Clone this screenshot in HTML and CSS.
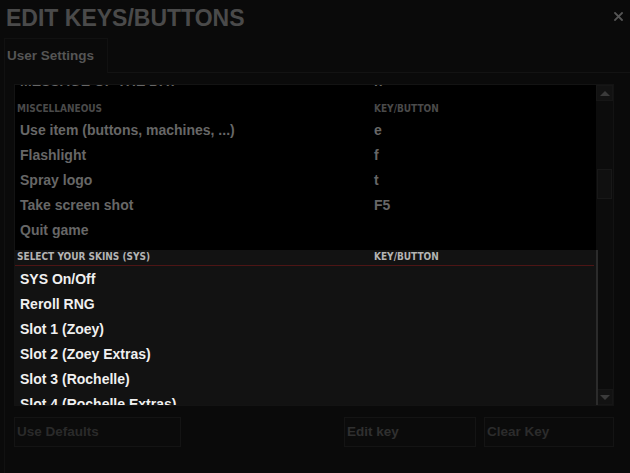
FILE: index.html
```html
<!DOCTYPE html>
<html>
<head>
<meta charset="utf-8">
<link rel="stylesheet" href="styles.css">
</head>
<body>
<div class="window">
  <header class="titlebar">
    <h1 class="title">EDIT KEYS/BUTTONS</h1>
    <span class="close" aria-label="Close">
      <svg width="9" height="9" viewBox="0 0 9 9"><path d="M1 1L8 8M8 1L1 8" stroke="#555" stroke-width="1.8" stroke-linecap="square"/></svg>
    </span>
  </header>
  <div class="tabs">
    <div class="tab">User Settings</div>
    <div class="tab-fill"></div>
  </div>
  <div class="panel">
    <div class="list">
      <div class="viewport">
        <div class="content">
          <section class="group">
            <div class="group-head"><span>MESSAGE</span><span>KEY/BUTTON</span></div>
            <div class="row"><span>MESSAGE OF THE DAY</span><span>n</span></div>
          </section>
          <section class="group">
            <div class="group-head"><span>MISCELLANEOUS</span><span>KEY/BUTTON</span></div>
            <div class="row"><span>Use item (buttons, machines, ...)</span><span>e</span></div>
            <div class="row"><span>Flashlight</span><span>f</span></div>
            <div class="row"><span>Spray logo</span><span>t</span></div>
            <div class="row"><span>Take screen shot</span><span>F5</span></div>
            <div class="row"><span>Quit game</span><span></span></div>
          </section>
          <section class="group active">
            <div class="group-head"><span>SELECT YOUR SKINS (SYS)</span><span>KEY/BUTTON</span></div>
            <div class="row"><span>SYS On/Off</span><span></span></div>
            <div class="row"><span>Reroll RNG</span><span></span></div>
            <div class="row"><span>Slot 1 (Zoey)</span><span></span></div>
            <div class="row"><span>Slot 2 (Zoey Extras)</span><span></span></div>
            <div class="row"><span>Slot 3 (Rochelle)</span><span></span></div>
            <div class="row"><span>Slot 4 (Rochelle Extras)</span><span></span></div>
            <div class="row"><span>Slot 5 (Coach)</span><span></span></div>
          </section>
        </div>
      </div>
      <div class="scrollbar">
        <div class="sb-btn"><span class="tri-up"></span></div>
        <div class="sb-track"><div class="sb-thumb"></div></div>
        <div class="sb-btn"><span class="tri-down"></span></div>
      </div>
    </div>
    <div class="actions">
      <div class="btn btn-defaults">Use Defaults</div>
      <div class="spacer"></div>
      <div class="btn btn-edit">Edit key</div>
      <div class="btn btn-clear">Clear Key</div>
    </div>
  </div>
</div>
</body>
</html>
```

FILE: styles.css
```css
html, body {
  margin: 0;
  padding: 0;
  background: #0a0a0a;
}
body {
  width: 630px;
  height: 473px;
  overflow: hidden;
  font-family: "Liberation Sans", Arial, sans-serif;
}
.window {
  width: 630px;
  height: 473px;
  display: flex;
  flex-direction: column;
}
.titlebar {
  height: 38px;
  display: flex;
  justify-content: space-between;
  align-items: flex-start;
}
.title {
  margin: 0;
  padding: 5px 0 0 6px;
  font-size: 23px;
  line-height: 26px;
  font-weight: bold;
  color: #4a4a4a;
}
.close {
  display: block;
  margin: 12px 7px 0 0;
  width: 9px;
  height: 9px;
}
.close svg { display: block; }
.tabs {
  display: flex;
  height: 35px;
}
.tab {
  margin-left: 4px;
  width: 100px;
  border: 1px solid #111;
  border-bottom: none;
  padding-left: 2px;
  font-size: 13.5px;
  font-weight: bold;
  line-height: 34px;
  color: #555;
}
.tab-fill {
  flex: 1;
  border-bottom: 1px solid #131313;
  height: 34px;
}
.panel {
  flex: 1;
  margin-left: 4px;
  border-left: 1px solid #111;
  padding: 11px 16px 0 9px;
  display: flex;
  flex-direction: column;
}
.list {
  height: 320px;
  border: 1px solid #131313;
  display: flex;
}
.viewport {
  width: 581px;
  overflow-x: visible;
  overflow-y: clip;
  background: #000;
}
.content {
  margin-top: -33px;
}
.group {
  padding-bottom: 8px;
  background: #000;
}
.group.active {
  background: #121212;
  position: relative;
  z-index: 1;
  box-shadow: 2px 0 0 #2b2b2b;
}
.group-head {
  display: grid;
  grid-template-columns: 357px 1fr;
  padding-left: 2px;
  height: 15px;
  line-height: 15px;
  border-bottom: 1px solid transparent;
  font-family: "DejaVu Sans Condensed", "DejaVu Sans", sans-serif;
  font-weight: bold;
  font-size: 10px;
  color: #4a4a4a;
}
.group.active .group-head {
  color: #b4b4b4;
  border-bottom-color: #4d1515;
  margin-right: 2px;
  line-height: 13px;
}
.row {
  display: grid;
  grid-template-columns: 354px 1fr;
  padding-left: 5px;
  height: 25px;
  line-height: 27px;
  font-size: 14px;
  font-weight: bold;
  color: #676767;
  white-space: nowrap;
}
.group.active .row {
  color: #f0f0f0;
}
.scrollbar {
  width: 17px;
  display: flex;
  flex-direction: column;
  background: #0c0c0c;
}
.sb-btn {
  height: 16px;
  background: #121212;
  border: 1px solid #161616;
  box-sizing: border-box;
  display: flex;
  align-items: center;
  justify-content: center;
}
.tri-up {
  width: 0;
  height: 0;
  border-left: 5px solid transparent;
  border-right: 5px solid transparent;
  border-bottom: 5px solid #3a3a3a;
}
.tri-down {
  width: 0;
  height: 0;
  border-left: 5px solid transparent;
  border-right: 5px solid transparent;
  border-top: 5px solid #3a3a3a;
}
.sb-track {
  flex: 1;
  padding: 0 1px;
}
.sb-thumb {
  margin-top: 68px;
  height: 30px;
  background: #101010;
  border: 1px solid #181818;
  box-sizing: border-box;
}
.actions {
  margin-top: 11px;
  display: flex;
  gap: 8px;
}
.btn {
  height: 30px;
  box-sizing: border-box;
  border: 1px solid #141414;
  background: #0b0b0b;
  font-size: 13.5px;
  font-weight: bold;
  line-height: 28px;
  padding-left: 2px;
  color: #2a2a2a;
}
.btn-defaults { width: 167px; }
.spacer { flex: 1; }
.btn-edit { width: 132px; color: #303030; }
.btn-clear { width: 130px; color: #2c2c2c; }
```
